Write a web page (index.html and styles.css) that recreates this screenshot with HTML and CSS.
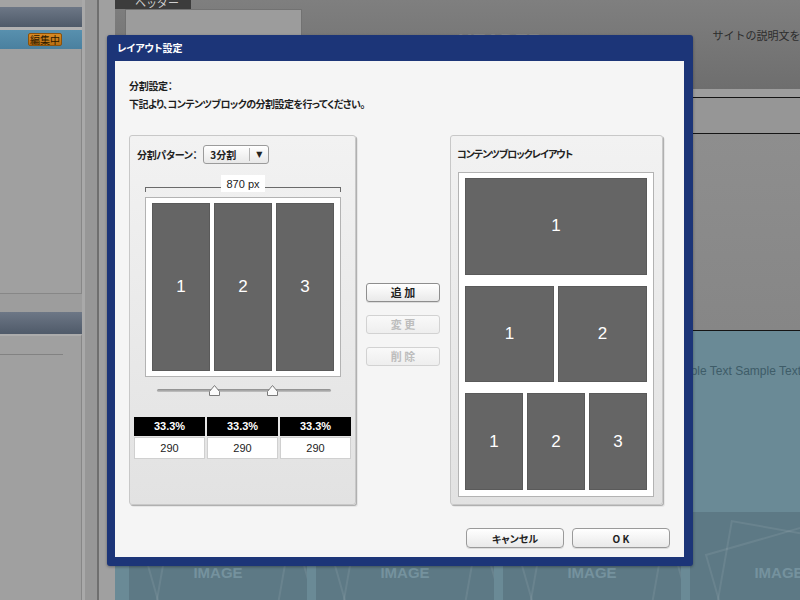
FILE: index.html
```html
<!DOCTYPE html>
<html lang="ja">
<head>
<meta charset="utf-8">
<title>レイアウト設定</title>
<link rel="stylesheet" href="styles.css">
</head>
<body>
<div class="app">
  <aside class="sidebar">
    <div class="sb-top"></div>
    <div class="sb-bar"></div>
    <div class="sb-sep"></div>
    <div class="sb-row"><span class="badge">編集中</span></div>
    <div class="sb-panel"></div>
    <div class="sb-gap"></div>
    <div class="sb-bar sb-bar-2"></div>
    <div class="sb-panel-2"><div class="sb-rule"></div></div>
  </aside>
  <div class="gutter"><div class="g1"></div><div class="g2"></div><div class="g3"></div><div class="g4"></div></div>
  <main class="site">
    <header class="site-header">
      <div class="tab"><span>ヘッダー</span></div>
      <div class="header-row">
        <div class="title-box">TITLE</div>
        <div class="header-logo">HEADER</div>
        <div class="header-desc">サイトの説明文を入力してください</div>
      </div>
    </header>
    <div class="nav"></div>
    <div class="subnav"></div>
    <div class="hero"></div>
    <section class="content">
      <p class="sample">Sample Text Sample Text Sample Text Sample Text Sample Text Sample Text Sample Text Sample Text Sample Text Sample Text</p>
      <div class="images">
        <div class="img-cell"><svg viewBox="0 0 178 88" width="178" height="88"><rect x="16" y="43" width="150" height="110" transform="rotate(-16 16 43)" class="frame"/><rect x="40" y="30" width="120" height="100" transform="rotate(10 160 30)" class="frame"/><text x="89" y="66" class="img-label">IMAGE</text></svg></div>
        <div class="img-cell"><svg viewBox="0 0 178 88" width="178" height="88"><rect x="16" y="43" width="150" height="110" transform="rotate(-16 16 43)" class="frame"/><rect x="40" y="30" width="120" height="100" transform="rotate(10 160 30)" class="frame"/><text x="89" y="66" class="img-label">IMAGE</text></svg></div>
        <div class="img-cell"><svg viewBox="0 0 178 88" width="178" height="88"><rect x="16" y="43" width="150" height="110" transform="rotate(-16 16 43)" class="frame"/><rect x="40" y="30" width="120" height="100" transform="rotate(10 160 30)" class="frame"/><text x="89" y="66" class="img-label">IMAGE</text></svg></div>
        <div class="img-cell"><svg viewBox="0 0 178 88" width="178" height="88"><rect x="16" y="43" width="150" height="110" transform="rotate(-16 16 43)" class="frame"/><rect x="40" y="30" width="120" height="100" transform="rotate(10 160 30)" class="frame"/><text x="89" y="66" class="img-label">IMAGE</text></svg></div>
      </div>
    </section>
  </main>
</div>

<div class="dialog" role="dialog" aria-label="レイアウト設定">
  <div class="dlg-title">レイアウト設定</div>
  <div class="dlg-body">
    <p class="lead">分割設定：</p>
    <p class="desc">下記より、コンテンツブロックの分割設定を行ってください。</p>
    <div class="panels">
      <section class="panel split-panel">
        <div class="pattern-row">
          <span class="pattern-label">分割パターン：</span>
          <div class="select"><span class="select-value">3分割</span><span class="select-arrow">▼</span></div>
        </div>
        <div class="measure"><span class="bracket bracket-l"></span><span class="measure-label">870 px</span><span class="bracket bracket-r"></span></div>
        <div class="preview cols">
          <div class="block">1</div><div class="block">2</div><div class="block">3</div>
        </div>
        <div class="slider">
          <div class="track"></div>
          <svg class="thumb thumb-1" viewBox="0 0 11 11" width="11" height="11"><path d="M5.5 0.5 L10.5 6.5 L10.5 10.5 L0.5 10.5 L0.5 6.5 Z" class="thumb-shape"/></svg>
          <svg class="thumb thumb-2" viewBox="0 0 11 11" width="11" height="11"><path d="M5.5 0.5 L10.5 6.5 L10.5 10.5 L0.5 10.5 L0.5 6.5 Z" class="thumb-shape"/></svg>
        </div>
        <div class="ratio-table">
          <div class="pct">33.3%</div><div class="pct">33.3%</div><div class="pct">33.3%</div>
          <div class="px">290</div><div class="px">290</div><div class="px">290</div>
        </div>
      </section>
      <div class="actions">
        <button class="btn btn-side" type="button">追 加</button>
        <button class="btn btn-side" type="button" disabled>変 更</button>
        <button class="btn btn-side" type="button" disabled>削 除</button>
      </div>
      <section class="panel layout-panel">
        <h2 class="panel-title">コンテンツブロックレイアウト</h2>
        <div class="preview stack">
          <div class="row"><div class="block">1</div></div>
          <div class="row"><div class="block">1</div><div class="block">2</div></div>
          <div class="row"><div class="block">1</div><div class="block">2</div><div class="block">3</div></div>
        </div>
      </section>
    </div>
    <div class="footer">
      <button class="btn btn-dlg" type="button">キャンセル</button>
      <button class="btn btn-dlg" type="button">O K</button>
    </div>
  </div>
</div>
</body>
</html>
```

FILE: styles.css
```css
* { box-sizing: border-box; }
html, body { margin: 0; padding: 0; }
body {
  width: 800px;
  height: 600px;
  overflow: hidden;
  position: relative;
  background: #a0a0a0;
  font-family: "Liberation Sans", "Noto Sans CJK JP", sans-serif;
  font-size: 11px;
  color: #222;
}

/* ---------- background application ---------- */
.app { display: flex; height: 600px; }

.sidebar { width: 82px; flex: none; display: flex; flex-direction: column; background: #a0a0a0; }
.sb-top { height: 7px; background: #a3a3a3; }
.sb-bar { height: 20px; background: linear-gradient(#6d7786, #4f5a69); }
.sb-bar-2 { height: 22px; }
.sb-sep { height: 3px; background: #b2b2b2; }
.sb-row {
  height: 19px;
  background: linear-gradient(#5890ae, #4a809f);
  display: flex; align-items: center; justify-content: flex-end;
  padding-right: 20px;
}
.badge {
  height: 13px; padding: 0 1px;
  background: linear-gradient(#d98b24, #b86e12);
  border: 1px solid #8a520c; border-radius: 2px;
  font-family: "Noto Sans CJK JP", sans-serif;
  font-size: 10px; line-height: 11px; color: #2a1800;
}
.sb-panel { height: 245px; border-right: 1px solid #878787; border-bottom: 1px solid #878787; }
.sb-gap { height: 18px; background: #9d9d9d; }
.sb-panel-2 { flex: 1; border-top: 2px solid #acacac; border-right: 1px solid #878787; }
.sb-rule { margin-top: 18px; width: 63px; height: 1px; background: #828282; }

.gutter { width: 33px; flex: none; display: flex; }
.g1 { width: 3px; background: #a9a9a9; }
.g2 { width: 12px; background: #979797; }
.g3 { width: 2px; background: #6f6f6f; }
.g4 { width: 16px; background: #a0a0a0; }

.site { flex: 1; display: flex; flex-direction: column; min-width: 0; overflow: hidden; }
.site-header { height: 89px; flex: none; background: linear-gradient(#7f7f7f, #6e6e6e); }
.tab {
  width: 76px; height: 9px; overflow: hidden;
  background: #3c3c3c; color: #cfcfcf;
  padding-left: 20px;
  font-family: "Noto Sans CJK JP", sans-serif;
}
.tab span { display: block; margin-top: -6px; line-height: 16px; }
.header-row { display: flex; align-items: flex-start; height: 80px; overflow: hidden; }
.header-row > * { flex: none; }
.title-box {
  margin-left: 10px; width: 177px; height: 62px;
  background: #9c9c9c; border: 1px solid #727272;
  padding-top: 21px; text-align: center;
  font-size: 18px; line-height: 22px; font-weight: bold; color: #919191;
}
.header-logo {
  margin: 20px 0 0 156px;
  font-size: 20px; line-height: 24px; font-weight: bold; color: #878787;
}
.header-desc {
  margin: 18px 0 0 170px; white-space: nowrap;
  font-family: "Noto Sans CJK JP", sans-serif;
  font-size: 11px; line-height: 16px; color: #2d2d2d;
}
.nav { height: 9px; flex: none; background: #9d9d9d; border-bottom: 1px solid #151515; }
.subnav { height: 36px; flex: none; background: #969696; border-bottom: 1px solid #151515; }
.hero { height: 197px; flex: none; background: linear-gradient(#8e8e8e, #868686); border-bottom: 1px solid #151515; }
.content { flex: 1; background: #6a8a96; overflow: hidden; }
.sample {
  margin: 0; padding: 33px 0 0 67px;
  font-size: 12px; line-height: 14px; color: #3e5c68; white-space: nowrap;
}
.images { display: flex; gap: 9px; margin-top: 134px; padding-left: 14px; }
.img-cell { width: 178px; height: 88px; flex: none; background: #5d7985; }
.img-cell svg { display: block; }
.frame { fill: none; stroke: rgba(255, 255, 255, 0.08); stroke-width: 2; }
.img-label { font-family: "Liberation Sans", sans-serif; font-weight: bold; font-size: 15px; fill: #75929e; text-anchor: middle; }

/* ---------- dialog ---------- */
.dialog {
  position: absolute; left: 107px; top: 35px;
  width: 586px; height: 531px;
  background: #1c3578; border-radius: 3px;
  box-shadow: 0 1px 3px rgba(0, 0, 0, 0.35);
  padding: 0 9px 9px 8px;
  display: flex; flex-direction: column;
}
.dlg-title {
  height: 26px; line-height: 26px; padding-left: 2px;
  color: #fff; font-weight: bold;
  font-family: "Noto Sans CJK JP", sans-serif; font-size: 10px;
  font-feature-settings: "palt";
}
.dlg-body {
  flex: 1; background: #f5f5f5;
  padding: 17px 14px 9px;
  display: flex; flex-direction: column;
}
.lead, .desc {
  margin: 0; line-height: 16px; font-weight: bold; font-size: 10px;
  font-family: "Noto Sans CJK JP", sans-serif;
  font-feature-settings: "palt";
  color: #1e1e1e;
}
.lead { letter-spacing: -0.3px; }
.desc { margin-top: 2px; letter-spacing: -0.55px; }

.panels { display: flex; margin-top: 23px; height: 370px; }
.panel {
  border: 1px solid #c8c8c8; border-radius: 3px;
  background: linear-gradient(#f2f2f2, #e2e2e2);
  box-shadow: 1px 1px 0 #b0b0b0, 2px 2px 0 rgba(0, 0, 0, 0.06);
}
.split-panel { width: 227px; flex: none; }

.pattern-row { display: flex; align-items: center; height: 19px; margin: 9px 0 0 7px; }
.pattern-label {
  font-weight: bold; font-family: "Noto Sans CJK JP", sans-serif; font-size: 10px;
  font-feature-settings: "palt"; letter-spacing: -0.3px; color: #222;
}
.select {
  margin-left: 6px; width: 66px; height: 19px;
  border: 1px solid #9b9b9b; border-radius: 3px;
  background: linear-gradient(#ffffff, #e8e8e8);
  display: flex; align-items: center;
}
.select-value {
  width: 46px; height: 13px; line-height: 13px; padding-left: 6px;
  border-right: 1px solid #b3b3b3;
  font-family: "Noto Sans CJK JP", sans-serif; font-weight: bold; font-size: 10px;
}
.select-arrow { flex: 1; text-align: center; font-family: "DejaVu Sans", sans-serif; font-size: 8px; color: #222; }

.measure { display: flex; align-items: flex-end; height: 17px; margin: 11px 14px 0 15px; }
.bracket { flex: 1; height: 5px; border-top: 1px solid #6a6a6a; }
.bracket-l { border-left: 1px solid #6a6a6a; }
.bracket-r { border-right: 1px solid #6a6a6a; }
.measure-label { align-self: stretch; padding: 0 5px; background: #fff; line-height: 19px; color: #222; }

.preview { background: #fff; border: 1px solid #b3b3b3; }
.preview.cols { margin: 5px 14px 0 15px; height: 180px; display: flex; gap: 4px; padding: 5px 6px; }
.block {
  flex: 1; background: #656565; border: 1px solid #5a5a5a;
  color: #fff; display: flex; align-items: center; justify-content: center;
  font-family: "Liberation Sans", sans-serif; font-size: 17px;
}

.slider { position: relative; width: 174px; height: 20px; margin: 3px 0 0 27px; padding-top: 9px; }
.track {
  height: 3px; border-radius: 2px;
  background: linear-gradient(#8a8a8a, #c4c4c4);
}
.thumb { position: absolute; top: 5px; margin-left: -6px; display: block; }
.thumb-1 { left: 33.33%; }
.thumb-2 { left: 66.67%; }
.thumb-shape { fill: #fbfbfb; stroke: #7a7a7a; stroke-width: 1; }

.ratio-table {
  display: grid; grid-template-columns: repeat(3, 71px);
  column-gap: 2px; row-gap: 1px; margin: 17px 0 0 4px;
}
.pct { height: 19px; line-height: 19px; background: #000; color: #fff; text-align: center; font-weight: bold; }
.px { height: 22px; line-height: 20px; background: #fff; border: 1px solid #d0d0d0; text-align: center; color: #222; }

.actions { width: 74px; flex: none; margin: 0 10px; padding-top: 148px; display: flex; flex-direction: column; gap: 13px; }

.btn {
  padding: 0; margin: 0;
  font-family: "Noto Sans CJK JP", sans-serif; font-size: 11px; font-weight: bold;
  color: #222;
  border: 1px solid #8e8e8e; border-radius: 3px;
  background: linear-gradient(#ffffff, #e9e9e9);
  box-shadow: 0 1px 0 rgba(0, 0, 0, 0.1);
}
.btn:disabled { color: #bdbdbd; border-color: #d2d2d2; background: linear-gradient(#f9f9f9, #eeeeee); box-shadow: none; }
.btn-side { width: 74px; height: 19px; line-height: 17px; }

.layout-panel { width: 213px; flex: none; padding: 0 8px 0 7px; }
.panel-title {
  margin: 10px 0 0 -1px; font-size: 10px; line-height: 16px; font-weight: bold;
  font-family: "Noto Sans CJK JP", sans-serif; font-feature-settings: "palt";
  letter-spacing: -1px; color: #222;
}
.preview.stack { margin-top: 10px; height: 325px; display: flex; flex-direction: column; gap: 11px; padding: 5px 6px 6px; }
.row { flex: 1; display: flex; gap: 4px; }

.footer { display: flex; justify-content: flex-end; gap: 8px; margin-top: 23px; }
.btn-dlg { width: 98px; height: 20px; border-radius: 4px; border-color: #9a9a9a; font-size: 10px; font-feature-settings: "palt"; }
```
